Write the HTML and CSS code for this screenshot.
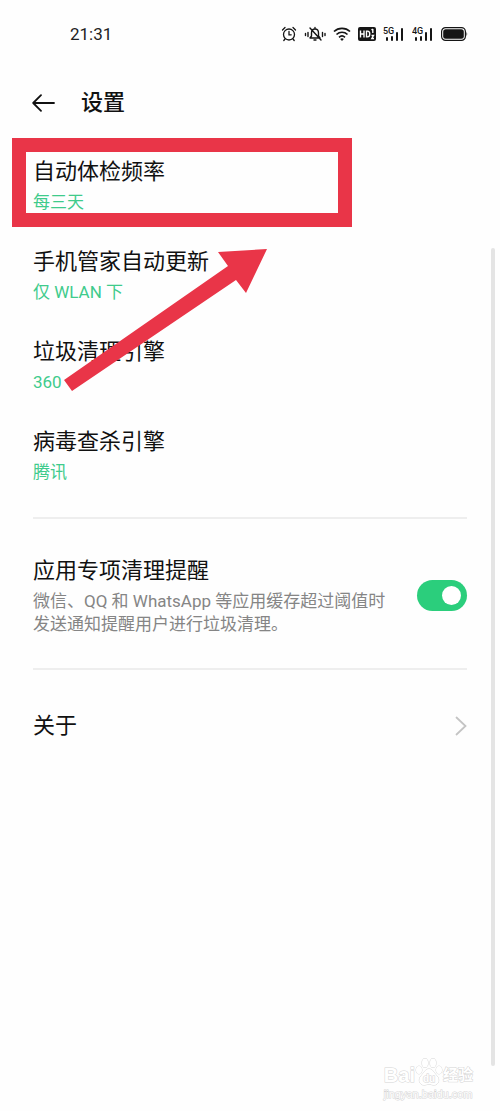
FILE: index.html
```html
<!DOCTYPE html>
<html lang="zh-CN">
<head>
<meta charset="utf-8">
<meta name="viewport" content="width=device-width, initial-scale=1">
<title>设置</title>
<link rel="stylesheet" href="styles.css">
</head>
<body>
<div class="screen">
  <div class="status">
    <time class="clock">21:31</time>
    <div class="status-icons">
      <svg width="16" height="16" viewBox="0 0 16 16" fill="none" stroke="#151515" stroke-width="1.3" stroke-linecap="round"><circle cx="8" cy="8.500" r="5.500"/><path d="M8 5.500v3.300h2.200M1.500 4l2.500-2.500M14.500 4L12 1.500M4 13l-1.200 1.500M12 13l1.200 1.500"/></svg>
      <svg width="22" height="16" viewBox="0 0 22 16" fill="none" stroke="#151515" stroke-width="1.400" stroke-linecap="round" stroke-linejoin="round"><path d="M6 12h10l-1.500-2V7c0-2.500-1.200-4-3.500-4S7.500 4.500 7.500 7v3zM10 14h2M11 1.500V3M6 2l11 12M4 6.500v4M18.500 6.500v4M1.500 7.500v2M21 7.500v2"/></svg>
      <svg width="18" height="16" viewBox="0 0 18 16" fill="none" stroke="#151515" stroke-width="1.700"><path d="M1 5.500c4.500-4.300 11.500-4.300 16 0M3.500 8.500c3.200-3 7.800-3 11 0M6 11.300c1.800-1.600 4.200-1.600 6 0"/><path d="M9 15l-1.800-2c1-1 2.600-1 3.600 0z" fill="#151515" stroke="none"/></svg>
      <svg width="18" height="14" viewBox="0 0 18 14"><rect width="18" height="14" rx="2" fill="#151515"/><path d="M2.500 3.500v7M6 3.500v7M2.500 7H6M8.500 4.100v5.800h1c3 0 3-5.800 0-5.800zM14.800 2v4M13.500 3l1.300-1M13.500 8.500h2L13.800 11.500h2.200" fill="none" stroke="#fff" stroke-width="1.400"/></svg>
      <svg width="22" height="16" viewBox="0 0 22 16" fill="#151515"><text class="net" x="0" y="8">5G</text><rect x="3" y="11" width="2" height="4" rx="1"/><rect x="8" y="10" width="2" height="5" rx="1"/><rect x="13" y="6" width="2" height="9" rx="1"/><rect x="18" y="2" width="2" height="13" rx="1"/></svg>
      <svg width="22" height="16" viewBox="0 0 22 16" fill="#151515"><text class="net" x="0" y="8">4G</text><rect x="3" y="11" width="2" height="4" rx="1"/><rect x="8" y="10" width="2" height="5" rx="1"/><rect x="13" y="6" width="2" height="9" rx="1"/><rect x="18" y="2" width="2" height="13" rx="1"/></svg>
      <svg width="27" height="14" viewBox="0 0 27 14"><rect x=".6" y=".6" width="23.800" height="12.800" rx="4" fill="none" stroke="#151515" stroke-width="1.200"/><rect x="2.200" y="2.200" width="20.600" height="9.600" rx="2.500" fill="#151515"/><path d="M25.500 4.500q1.500 2.500 0 5z" fill="#151515"/></svg>
    </div>
  </div>

  <header class="header">
    <button class="back" type="button" aria-label="返回"><svg width="24" height="18" viewBox="0 0 24 18" fill="none" stroke="#111" stroke-width="1.800" stroke-linecap="round" stroke-linejoin="round"><path d="M22 9H1.500M9 1.200L1.200 9 9 16.800"/></svg></button>
    <h1 class="heading">设置</h1>
  </header>

  <main class="settings">
    <section class="group">
      <div class="item"><div class="title">自动体检频率</div><div class="value">每三天</div><div class="frame"></div></div>
      <div class="item"><div class="title">手机管家自动更新</div><div class="value">仅 WLAN 下</div></div>
      <div class="item"><div class="title">垃圾清理引擎</div><div class="value">360</div></div>
      <div class="item"><div class="title">病毒查杀引擎</div><div class="value">腾讯</div></div>
      <svg class="arrow" width="204" height="143" viewBox="0 0 204 143"><path d="M203 1l-49 3 10 14L0 132l8 11 164-111 10 13z" fill="#e93548"/></svg>
    </section>
    <section class="group reminder">
      <label class="reminder-text" for="remind"><span class="title">应用专项清理提醒</span><span class="desc">微信、QQ 和 WhatsApp 等应用缓存超过阈值时<br>发送通知提醒用户进行垃圾清理。</span></label>
      <input class="switch" id="remind" type="checkbox" role="switch" checked>
    </section>
    <a class="about title" href="#">关于<svg width="12" height="20" viewBox="0 0 12 20" fill="none" stroke="#c4c4c4" stroke-width="1.800" stroke-linecap="round"><path d="M1.500 1.500L10.500 10l-9 8.500"/></svg></a>
  </main>

  <div class="scrollbar"></div>
  <div class="watermark">
    <div class="brand"><span>Bai</span><svg width="28" height="30" viewBox="0 0 28 30" fill="#fff" stroke="#d4d4d4" stroke-width="1"><ellipse cx="4" cy="13" rx="3" ry="4"/><ellipse cx="10" cy="6" rx="3" ry="4.500"/><ellipse cx="18" cy="6" rx="3" ry="4.500"/><ellipse cx="24" cy="13" rx="3" ry="4"/><path d="M14 12c-4 0-5 4-8 7s-2 9 3 9c3 0 3-1 5-1s2 1 5 1c5 0 6-6 3-9s-4-7-8-7z"/><text class="du" x="8" y="25">du</text></svg><span class="jingyan">经验</span></div>
    <div class="site">jingyan.baidu.com</div>
  </div>
</div>
</body>
</html>
```
FILE: styles.css
```css
* { box-sizing: border-box; }
body {
  margin: 0;
  background: #fefefe;
  color: #111;
  font-family: Roboto, "Noto Sans CJK SC", sans-serif;
}
.screen { position: relative; min-height: 100vh; }
.status {
  display: flex;
  align-items: center;
  justify-content: space-between;
  height: 68px;
  padding: 0 32px 0 70px;
}
.clock { font-size: 17px; line-height: 24px; color: #222; }
.status-icons { display: flex; align-items: center; gap: 7px; }
.net { font: 500 9px Roboto, sans-serif; }
.header {
  display: flex;
  align-items: center;
  gap: 25px;
  height: 70px;
  padding: 0 32px;
}
.back {
  display: flex;
  padding: 0;
  border: 0;
  background: none;
}
.heading { margin: 0; font-size: 22px; line-height: 32px; font-weight: 500; }
.settings { padding: 3px 33px 0; }
.group { position: relative; border-bottom: 2px solid #eee; }
.group:first-child { padding-bottom: 16px; }
.item { position: relative; height: 90px; padding-top: 15px; }
.title { display: block; font-size: 22px; line-height: 32px; }
.value { font-size: 17px; line-height: 28px; color: #3fcb8c; }
.frame {
  position: absolute;
  top: -3px;
  left: -21px;
  width: 340px;
  height: 89px;
  border: 14px solid #e93548;
}
.arrow { position: absolute; top: 107px; left: 31px; }
.reminder {
  display: flex;
  align-items: center;
  justify-content: space-between;
  padding: 36px 0 32px;
}
.desc {
  display: block;
  padding-top: 3px;
  font-size: 17px;
  line-height: 23px;
  color: #858585;
  white-space: nowrap;
}
.switch {
  flex: none;
  appearance: none;
  display: flex;
  align-items: center;
  width: 50px;
  height: 31px;
  margin: 0;
  padding: 6px;
  border-radius: 16px;
  background: #2bce7c;
}
.switch::before {
  content: "";
  width: 19px;
  height: 19px;
  border-radius: 50%;
  background: #fff;
}
.switch:checked { justify-content: flex-end; }
.about {
  display: flex;
  align-items: center;
  justify-content: space-between;
  padding: 40px 0;
  color: inherit;
  text-decoration: none;
}
.scrollbar {
  position: absolute;
  top: 248px;
  right: 5px;
  bottom: 45px;
  width: 4px;
  border-radius: 2px;
  background: #e4e4e4;
}
.watermark {
  position: absolute;
  right: 27px;
  bottom: 10px;
  color: #fff;
  font-family: "Liberation Sans", "Noto Sans CJK SC", sans-serif;
  -webkit-text-stroke: 1px #d4d4d4;
  paint-order: stroke;
}
.brand { display: flex; align-items: flex-end; font-size: 20px; line-height: 24px; font-weight: 700; }
.jingyan { font-size: 15px; }
.du { font: 700 10px "Liberation Sans", sans-serif; }
.site { font-size: 11px; line-height: 14px; }
```
